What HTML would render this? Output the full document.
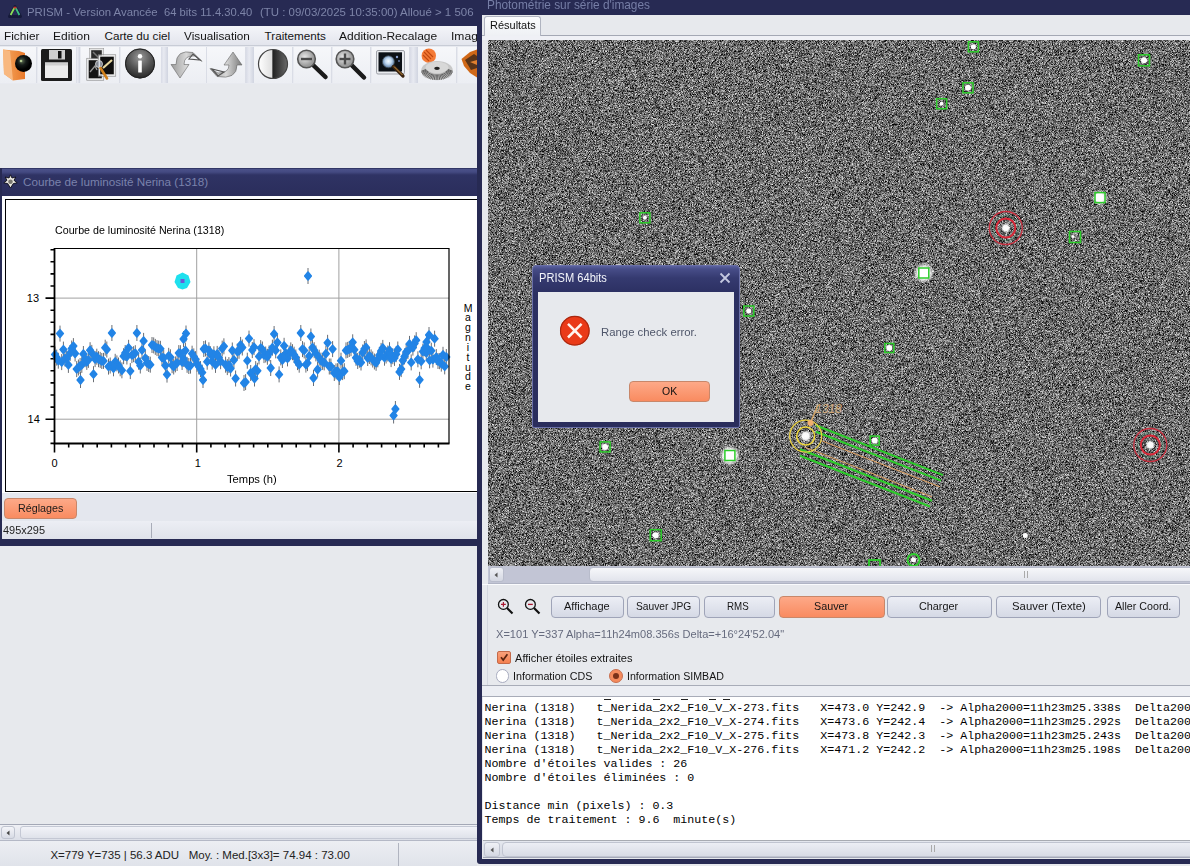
<!DOCTYPE html><html><head><meta charset="utf-8"><style>
*{margin:0;padding:0;box-sizing:border-box}
html,body{width:1190px;height:866px;overflow:hidden;background:#e7e9ed;font-family:"Liberation Sans",sans-serif;position:relative}
.a{position:absolute}
.t{position:absolute;white-space:pre;line-height:1}
.btn{position:absolute;border:1px solid #9fa4b8;border-radius:4px;background:linear-gradient(#eceef5,#d5d9e5)}
.obtn{position:absolute;border:1px solid #c8876a;border-radius:4px;background:linear-gradient(#fda988,#f98b60)}
.mono{position:absolute;font-family:"Liberation Mono",monospace;font-size:11.67px;white-space:pre;line-height:14px;color:#000}
</style></head><body>

<div class="a" style="left:0;top:0;width:478px;height:26px;background:#272a53"></div>
<svg class="a" style="left:7px;top:3px" width="16" height="17" viewBox="0 0 16 17">
<path d="M2.5 13.5 L8 3.5 L13.5 13.5 Z" fill="#252a58" stroke="#161a3a" stroke-width="3" stroke-linejoin="round"/>
<path d="M3.6 12 L7.3 5" stroke="#8ce05a" stroke-width="1.8"/><path d="M8.7 5 L12.4 12" stroke="#3cc080" stroke-width="1.8"/>
<path d="M6.6 4.6 L9.4 4.6" stroke="#c8302a" stroke-width="1.8"/></svg>
<div class="t" style="left:27.00px;top:6.00px;font-size:11.7px;color:#7d84a8;font-family:'Liberation Sans';transform:scaleX(0.9733);transform-origin:0 0;">PRISM - Version Avancée</div>
<div class="t" style="left:163.50px;top:6.00px;font-size:11.7px;color:#7d84a8;font-family:'Liberation Sans';transform:scaleX(0.9589);transform-origin:0 0;">64 bits 11.4.30.40</div>
<div class="t" style="left:260.30px;top:6.00px;font-size:11.7px;color:#7d84a8;font-family:'Liberation Sans';transform:scaleX(0.9794);transform-origin:0 0;">(TU : 09/03/2025 10:35:00) Alloué &gt; 1 506 :</div>
<div class="a" style="left:0;top:25.5px;width:477px;height:20.5px;background:linear-gradient(#f4f5f9,#e2e4ec)"></div>
<div class="t" style="left:4.40px;top:30.10px;font-size:11.7px;color:#141414;font-family:'Liberation Sans';transform:scaleX(1.0085);transform-origin:0 0;">Fichier</div>
<div class="t" style="left:53.40px;top:30.10px;font-size:11.7px;color:#141414;font-family:'Liberation Sans';transform:scaleX(1.0315);transform-origin:0 0;">Edition</div>
<div class="t" style="left:104.50px;top:30.10px;font-size:11.7px;color:#141414;font-family:'Liberation Sans';">Carte du ciel</div>
<div class="t" style="left:184.30px;top:30.10px;font-size:11.7px;color:#141414;font-family:'Liberation Sans';transform:scaleX(1.0072);transform-origin:0 0;">Visualisation</div>
<div class="t" style="left:264.60px;top:30.10px;font-size:11.7px;color:#141414;font-family:'Liberation Sans';">Traitements</div>
<div class="t" style="left:339.40px;top:30.10px;font-size:11.7px;color:#141414;font-family:'Liberation Sans';transform:scaleX(1.0279);transform-origin:0 0;">Addition-Recalage</div>
<div class="t" style="left:451.20px;top:30.10px;font-size:11.7px;color:#141414;font-family:'Liberation Sans';transform:scaleX(1.0344);transform-origin:0 0;">Imag</div>
<div class="a" style="left:0;top:45px;width:477px;height:1px;background:#c8ccd6"></div><div class="a" style="left:0;top:46px;width:477px;height:38px;background:#e8eaf0"></div><div class="a" style="left:0px;top:47px;width:37px;height:35.5px;background:linear-gradient(#f6f7fa,#eceef3);border-right:1px solid #dadde6"></div><div class="a" style="left:37.5px;top:47px;width:39.5px;height:35.5px;background:linear-gradient(#f6f7fa,#eceef3);border-right:1px solid #dadde6"></div><div class="a" style="left:81px;top:47px;width:39px;height:35.5px;background:linear-gradient(#f6f7fa,#eceef3);border-right:1px solid #dadde6"></div><div class="a" style="left:120.5px;top:47px;width:42px;height:35.5px;background:linear-gradient(#f6f7fa,#eceef3);border-right:1px solid #dadde6"></div><div class="a" style="left:168px;top:47px;width:38.5px;height:35.5px;background:linear-gradient(#f6f7fa,#eceef3);border-right:1px solid #dadde6"></div><div class="a" style="left:207px;top:47px;width:39px;height:35.5px;background:linear-gradient(#f6f7fa,#eceef3);border-right:1px solid #dadde6"></div><div class="a" style="left:254px;top:47px;width:39px;height:35.5px;background:linear-gradient(#f6f7fa,#eceef3);border-right:1px solid #dadde6"></div><div class="a" style="left:293.5px;top:47px;width:38.5px;height:35.5px;background:linear-gradient(#f6f7fa,#eceef3);border-right:1px solid #dadde6"></div><div class="a" style="left:332.5px;top:47px;width:38.5px;height:35.5px;background:linear-gradient(#f6f7fa,#eceef3);border-right:1px solid #dadde6"></div><div class="a" style="left:371.5px;top:47px;width:38.5px;height:35.5px;background:linear-gradient(#f6f7fa,#eceef3);border-right:1px solid #dadde6"></div><div class="a" style="left:418px;top:47px;width:39px;height:35.5px;background:linear-gradient(#f6f7fa,#eceef3);border-right:1px solid #dadde6"></div><div class="a" style="left:457.5px;top:47px;width:20px;height:35.5px;background:linear-gradient(#f6f7fa,#eceef3);border-right:1px solid #dadde6"></div><div class="a" style="left:76px;top:47px;width:4px;height:35.5px;background:linear-gradient(90deg,#d8dbe6,#e8eaf1 40%,#d0d4e0)"></div><div class="a" style="left:161px;top:47px;width:7px;height:35.5px;background:linear-gradient(90deg,#d8dbe6,#e8eaf1 40%,#d0d4e0)"></div><div class="a" style="left:246px;top:47px;width:8px;height:35.5px;background:linear-gradient(90deg,#d8dbe6,#e8eaf1 40%,#d0d4e0)"></div><div class="a" style="left:410px;top:47px;width:8px;height:35.5px;background:linear-gradient(90deg,#d8dbe6,#e8eaf1 40%,#d0d4e0)"></div><svg class="a" style="left:0;top:44px" width="477" height="42" viewBox="0 44 477 42">
<defs>
<linearGradient id="gfold" x1="0" x2="1"><stop offset="0" stop-color="#f6a860"/><stop offset="1" stop-color="#e8782a"/></linearGradient>
<radialGradient id="gball" cx="0.4" cy="0.35"><stop offset="0" stop-color="#5a6a50"/><stop offset="0.5" stop-color="#151a18"/><stop offset="1" stop-color="#000"/></radialGradient>
<radialGradient id="ginfo" cx="0.5" cy="0.3" r="0.7"><stop offset="0" stop-color="#9a9a9a"/><stop offset="0.55" stop-color="#555"/><stop offset="1" stop-color="#262626"/></radialGradient>
<linearGradient id="garrow" x1="0" x2="1"><stop offset="0" stop-color="#9a9a9a"/><stop offset="0.5" stop-color="#d8d8d8"/><stop offset="1" stop-color="#7a7a7a"/></linearGradient>
<linearGradient id="ghalf" x1="0" x2="1"><stop offset="0" stop-color="#fff"/><stop offset="0.45" stop-color="#e0e0e0"/><stop offset="0.5" stop-color="#222"/><stop offset="1" stop-color="#6a6a6a"/></linearGradient>
<radialGradient id="glens" cx="0.4" cy="0.4"><stop offset="0" stop-color="#e8e8e8"/><stop offset="1" stop-color="#9a9a9a"/></radialGradient>
<radialGradient id="gscr" cx="0.5" cy="0.45"><stop offset="0" stop-color="#f4faff"/><stop offset="0.5" stop-color="#c0d8f0"/><stop offset="1" stop-color="#6888b0"/></radialGradient>
<linearGradient id="ggear" x1="0" x2="0" y1="0" y2="1"><stop offset="0" stop-color="#f0f0f0"/><stop offset="1" stop-color="#8a8a8a"/></linearGradient>
</defs>
<!-- 1 folder + lens -->
<path d="M3 49.5 L19 51 L25 53 L25 79 L13 80.5 L4 74Z" fill="url(#gfold)"/>
<path d="M3 49.5 L10 51 L13 80.5 L4 74Z" fill="#f8b880"/>
<circle cx="23.5" cy="63.5" r="8.5" fill="url(#gball)"/>
<circle cx="21" cy="61" r="1.3" fill="#b0c890"/>
<!-- 2 floppy -->
<rect x="41" y="49" width="31" height="32" rx="1.5" fill="#1c1c1c"/>
<rect x="49" y="50" width="16" height="9.5" fill="#cfcfcf"/><rect x="58" y="51" width="3.5" height="7.5" fill="#111"/>
<rect x="45" y="62.5" width="23" height="15.5" fill="#ececec"/><rect x="45" y="62.5" width="23" height="3" fill="#d0d0d0"/>
<!-- 3 images -->
<rect x="90.5" y="49.5" width="12" height="12" fill="#2a2a2a" stroke="#e4e4e4" stroke-width="1.4"/><rect x="89.3" y="48.3" width="14.4" height="14.4" fill="none" stroke="#999" stroke-width="0.6"/>
<path d="M93 52 L99 58" stroke="#777" stroke-width="1.5"/>
<rect x="86.8" y="58.3" width="16.9" height="21.9" fill="none" stroke="#888" stroke-width="0.7"/><rect x="88" y="59.5" width="14.5" height="19.5" fill="#151515" stroke="#e8e8e8" stroke-width="1.4"/>
<path d="M90 72 L95 66 L97 70" stroke="#999" stroke-width="1.3" fill="none"/>
<rect x="98.3" y="54.8" width="17.4" height="21.4" fill="none" stroke="#888" stroke-width="0.7"/><rect x="99.5" y="56" width="15" height="19" fill="#0e0e0e" stroke="#e8e8e8" stroke-width="1.4"/>
<path d="M103 68 L112 60" stroke="#e8d8a0" stroke-width="2.2"/>
<circle cx="99" cy="64" r="3.5" fill="#c8d0e0" fill-opacity="0.6" stroke="#ddd" stroke-width="0.8"/>
<path d="M100.5 68 L107 78.5" stroke="#d0801c" stroke-width="2.6" stroke-linecap="round"/>
<!-- 4 info -->
<circle cx="140" cy="63.5" r="15" fill="url(#ginfo)"/>
<circle cx="140" cy="63.5" r="14.5" fill="none" stroke="#222" stroke-width="1"/>
<circle cx="140" cy="56.3" r="2.2" fill="#fff"/><rect x="138.2" y="60.5" width="3.6" height="12" rx="0.5" fill="#fff"/>
<!-- 5 arrow down-left -->
<path d="M171 64.5 L180 78 L189 64.5 L184 64.5 Q184 55 195 56 L202 61.5 L193 52.5 Q176 49 176 64.5Z" fill="url(#garrow)" stroke="#666" stroke-width="0.6"/>
<path d="M189 59 L193 54 L200 60Z" fill="none" stroke="#555" stroke-width="1.2"/>
<!-- 6 arrow up-right -->
<path d="M242 65 L233 52 L224 65 L229 65 Q229 73 218 73 L210 68.5 L217 76.5 Q237 80 237 65Z" fill="url(#garrow)" stroke="#666" stroke-width="0.6"/>
<path d="M212 69 L218 76 L224 72Z" fill="none" stroke="#555" stroke-width="1.2"/>
<!-- 7 half circle -->
<circle cx="273" cy="64" r="14.5" fill="url(#ghalf)" stroke="#444" stroke-width="1.2"/>
<!-- 8 magnifier minus -->
<path d="M312 64 L325.5 77" stroke="#1a1a1a" stroke-width="4.5" stroke-linecap="round"/>
<circle cx="306.5" cy="59" r="8.8" fill="url(#glens)" stroke="#555" stroke-width="1.6"/>
<rect x="301" y="57.8" width="11" height="2.4" fill="#4a4a4a"/>
<!-- 9 magnifier plus -->
<path d="M350.5 64 L364 77.5" stroke="#1a1a1a" stroke-width="4.5" stroke-linecap="round"/>
<circle cx="345" cy="59" r="8.8" fill="url(#glens)" stroke="#555" stroke-width="1.6"/>
<rect x="339.5" y="57.8" width="11" height="2.4" fill="#4a4a4a"/><rect x="343.8" y="53.5" width="2.4" height="11" fill="#4a4a4a"/>
<!-- 10 screen -->
<rect x="376.5" y="50.5" width="28" height="23.5" rx="1.5" fill="#e8eaee" stroke="#8a8e96" stroke-width="0.8"/>
<rect x="378.5" y="52.3" width="23.5" height="19.2" fill="#0b1016"/>
<circle cx="397" cy="57" r="1.2" fill="#8aa0d0"/><circle cx="399" cy="61" r="0.9" fill="#6a80b0"/>
<circle cx="388.4" cy="61.8" r="6" fill="url(#gscr)"/>
<circle cx="388.4" cy="61.8" r="6" fill="none" stroke="#404a50" stroke-width="0.8"/>
<path d="M393.5 66.5 L403 76" stroke="#3a2410" stroke-width="3.2" stroke-linecap="round"/>
<path d="M394 66.5 L402.5 75" stroke="#c89040" stroke-width="1"/>
<!-- 11 gears -->
<circle cx="428.8" cy="55.7" r="7.2" fill="#f47a36"/>
<path d="M424 52 L431 59 M426 50 L433 57 M423 55 L429 61" stroke="#c04810" stroke-width="1.1"/>
<ellipse cx="437" cy="70.5" rx="15.8" ry="9.6" fill="#c8c8c8"/>
<path d="M446.8 69.0L452.7 71.3M446.6 69.7L452.5 72.5M446.3 70.4L452.0 73.6M445.8 71.1L451.3 74.6M445.3 71.7L450.4 75.6M444.6 72.2L449.3 76.5M443.8 72.8L448.0 77.4M442.9 73.2L446.6 78.1M442.0 73.6L445.0 78.8M441.0 73.9L443.4 79.3M439.9 74.2L441.6 79.7M438.7 74.4L439.8 79.9M437.6 74.4L437.9 80.1M436.4 74.4L436.1 80.1M435.3 74.4L434.2 79.9M434.1 74.2L432.4 79.7M433.0 73.9L430.6 79.3M432.0 73.6L429.0 78.8M431.1 73.2L427.4 78.1M430.2 72.8L426.0 77.4M429.4 72.2L424.7 76.5M428.7 71.7L423.6 75.6M428.2 71.1L422.7 74.6M427.7 70.4L422.0 73.6M427.4 69.7L421.5 72.5M427.2 69.0L421.3 71.3" stroke="#555" stroke-width="0.9"/>
<ellipse cx="437" cy="67.5" rx="11.5" ry="5.8" fill="#d8d8d8"/>
<ellipse cx="437" cy="68.3" rx="2.8" ry="1.6" fill="#222"/>
<!-- 12 partial -->
<path d="M461.5 59 L470 52 L477 49.5 L477 77.5 L470 73 L464 66Z" fill="#d06818"/>
<path d="M465 60 L474 54 L477 56 L477 68 L471 70Z" fill="#5a3418"/>
<path d="M470 62 L477 60 L477 65Z" fill="#e08030"/>
</svg>
<div class="a" style="left:0;top:168px;width:477px;height:28px;background:linear-gradient(#262a55 0px,#4a5088 1.5px,#444a82 4px,#2f3364 7px,#2a2d5b 28px)"></div>
<svg class="a" style="left:3px;top:174px" width="15" height="15" viewBox="0 0 15 15">
<path d="M7.5 0.8 L9 4 L12.8 3 L11 6.3 L14.2 8.8 L10.3 9.6 L7.5 14 L4.7 9.6 L0.8 8.8 L4 6.3 L2.2 3 L6 4Z" fill="#ebe9e2" stroke="#0d0d18" stroke-width="0.9"/><circle cx="7.5" cy="7.7" r="2.3" fill="#7a7870"/></svg>
<div class="t" style="left:23.00px;top:176.10px;font-size:11.7px;color:#7a82ac;font-family:'Liberation Sans';">Courbe de luminosité Nerina (1318)</div>
<div class="a" style="left:0;top:196px;width:477px;height:343px;background:#e4e7ee"></div>
<div class="a" style="left:0;top:168px;width:2px;height:377px;background:#272a53"></div>
<div class="a" style="left:2px;top:196px;width:475px;height:297px;background:#fbfcfe"></div>
<div class="a" style="left:5px;top:199px;width:472px;height:293px;border:1px solid #000;border-right:none;background:#fff"></div>
<svg class="a" style="left:0;top:0" width="477" height="545" viewBox="0 0 477 545"><line x1="196.7" y1="248.5" x2="196.7" y2="443.5" stroke="#a0a0a0" stroke-width="1"/><line x1="338.9" y1="248.5" x2="338.9" y2="443.5" stroke="#a0a0a0" stroke-width="1"/><line x1="54.5" y1="298.1" x2="449" y2="298.1" stroke="#a0a0a0" stroke-width="1"/><line x1="54.5" y1="419.2" x2="449" y2="419.2" stroke="#a0a0a0" stroke-width="1"/><path d="M50.5 249.7H54.5M50.5 261.8H54.5M50.5 273.9H54.5M50.5 286.0H54.5M45.5 298.1H54.5M50.5 310.2H54.5M50.5 322.3H54.5M50.5 334.4H54.5M50.5 346.5H54.5M50.5 358.7H54.5M50.5 370.8H54.5M50.5 382.9H54.5M50.5 395.0H54.5M50.5 407.1H54.5M45.5 419.2H54.5M50.5 431.3H54.5M50.5 443.4H54.5M54.5 443.5V452.5M68.7 443.5V447.5M82.9 443.5V447.5M97.2 443.5V447.5M111.4 443.5V447.5M125.6 443.5V447.5M139.8 443.5V447.5M154.0 443.5V447.5M168.3 443.5V447.5M182.5 443.5V447.5M196.7 443.5V452.5M210.9 443.5V447.5M225.1 443.5V447.5M239.4 443.5V447.5M253.6 443.5V447.5M267.8 443.5V447.5M282.0 443.5V447.5M296.2 443.5V447.5M310.5 443.5V447.5M324.7 443.5V447.5M338.9 443.5V452.5M353.1 443.5V447.5M367.3 443.5V447.5M381.6 443.5V447.5M395.8 443.5V447.5M410.0 443.5V447.5M424.2 443.5V447.5M438.4 443.5V447.5" stroke="#000" stroke-width="1.6" fill="none"/><path d="M55.0 346.6V362.6M56.7 349.6V365.6M58.3 352.7V368.7M60.0 325.6V341.6M61.7 354.1V370.1M63.4 341.6V357.6M65.0 350.5V366.5M66.7 350.7V366.7M68.4 356.9V372.9M70.1 345.1V361.1M71.7 340.5V356.5M73.4 338.1V354.1M75.1 345.5V361.5M76.7 361.1V377.1M78.4 359.5V375.5M80.1 358.0V374.0M81.8 356.9V372.9M83.4 346.0V362.0M85.1 351.2V367.2M86.8 353.9V369.9M88.4 351.9V367.9M90.1 342.2V358.2M91.8 344.9V360.9M93.5 366.2V382.2M95.1 351.1V367.1M96.8 348.7V364.7M98.5 351.2V367.2M100.2 351.9V367.9M101.8 353.0V369.0M103.5 352.9V368.9M105.2 339.7V355.7M106.8 341.5V357.5M108.5 358.6V374.6M110.2 357.5V373.5M111.9 325.0V341.0M113.5 360.3V376.3M115.2 353.8V369.8M116.9 355.4V371.4M118.5 357.5V373.5M120.2 360.3V376.3M121.9 362.3V378.3M123.6 348.2V364.2M125.2 345.0V361.0M126.9 348.5V364.5M128.6 339.8V355.8M130.3 363.1V379.1M131.9 347.1V363.1M133.6 346.2V362.2M135.3 345.2V361.2M136.9 325.0V341.0M138.6 353.7V369.7M140.3 357.5V373.5M142.0 342.1V358.1M143.6 332.9V348.9M145.3 350.2V366.2M147.0 354.9V370.9M148.7 356.0V372.0M150.3 356.7V372.7M152.0 337.0V353.0M153.7 337.4V353.4M155.3 338.9V354.9M157.0 340.1V356.1M158.7 340.6V356.6M160.4 340.8V356.8M162.0 349.6V365.6M163.7 349.9V365.9M165.4 357.5V373.5M167.0 366.6V382.6M168.7 347.8V363.8M170.4 349.3V365.3M172.1 357.2V373.2M173.7 358.5V374.5M175.4 356.4V372.4M177.1 355.0V371.0M178.8 345.1V361.1M180.4 345.2V361.2M182.1 354.0V370.0M183.8 351.0V367.0M185.4 342.5V358.5M187.1 356.8V372.8M188.8 358.0V374.0M190.5 357.6V373.6M192.1 345.7V361.7M193.8 348.4V364.4M195.5 351.2V367.2M197.1 355.8V371.8M198.8 358.5V374.5M200.5 361.1V377.1M202.2 364.6V380.6M203.8 341.0V357.0M205.5 340.4V356.4M207.2 353.7V369.7M208.9 342.3V358.3M210.5 346.3V362.3M212.2 353.5V369.5M213.9 346.3V362.3M215.5 356.9V372.9M217.2 345.9V361.9M218.9 349.7V365.7M220.6 353.2V369.2M222.2 340.6V356.6M223.9 338.3V354.3M225.6 356.7V372.7M227.3 359.1V375.1M228.9 357.1V373.1M230.6 360.5V376.5M232.3 342.5V358.5M233.9 352.0V368.0M235.6 370.5V386.5M237.3 343.6V359.6M239.0 342.8V358.8M240.6 336.9V352.9M242.3 339.5V355.5M244.0 375.0V391.0M245.6 374.1V390.1M247.3 352.7V368.7M249.0 330.6V346.6M250.7 365.0V381.0M252.3 342.1V358.1M254.0 339.1V355.1M255.7 361.1V377.1M257.4 362.8V378.8M259.0 348.4V364.4M260.7 340.1V356.1M262.4 341.5V357.5M264.0 347.1V363.1M265.7 346.5V362.5M267.4 348.8V364.8M269.1 345.4V361.4M270.7 360.0V376.0M272.4 339.7V355.7M274.1 326.0V342.0M275.7 342.4V358.4M277.4 334.5V350.5M279.1 366.4V382.4M280.8 349.4V365.4M282.4 352.0V368.0M284.1 337.8V353.8M285.8 345.4V361.4M287.5 350.4V366.4M289.1 345.5V361.5M290.8 342.4V358.4M292.5 344.2V360.2M294.1 346.7V362.7M295.8 349.5V365.5M297.5 354.1V370.1M299.2 356.7V372.7M300.8 325.0V341.0M302.5 341.1V357.1M304.2 342.4V358.4M305.9 356.6V372.6M307.5 355.1V371.1M309.2 348.0V364.0M310.9 328.5V344.5M312.5 339.6V355.6M314.2 342.2V358.2M315.9 345.4V361.4M317.6 361.5V377.5M319.2 349.7V365.7M320.9 352.6V368.6M322.6 353.9V369.9M324.2 354.4V370.4M325.9 345.7V361.7M327.6 334.8V350.8M329.3 358.5V374.5M330.9 358.5V374.5M332.6 341.1V357.1M334.3 365.0V381.0M336.0 363.4V379.4M337.6 363.2V379.2M339.3 369.0V385.0M341.0 352.7V368.7M342.6 364.1V380.1M344.3 363.2V379.2M346.0 342.4V358.4M347.7 341.9V357.9M349.3 341.0V357.0M351.0 340.2V356.2M352.7 334.3V350.3M354.3 341.7V357.7M356.0 349.8V365.8M357.7 353.0V369.0M359.4 351.7V367.7M361.0 354.5V370.5M362.7 344.5V360.5M364.4 341.0V357.0M366.1 339.4V355.4M367.7 350.0V366.0M369.4 348.0V364.0M371.1 349.4V365.4M372.7 351.5V367.5M374.4 353.5V369.5M376.1 354.8V370.8M377.8 351.3V367.3M379.4 346.9V362.9M381.1 342.9V358.9M382.8 339.9V355.9M384.5 349.7V365.7M386.1 347.5V363.5M387.8 345.5V361.5M389.5 342.2V358.2M391.1 351.1V367.1M392.8 348.2V364.2M394.5 349.9V365.9M396.2 346.2V362.2M397.8 341.5V357.5M399.5 363.9V379.9M401.2 361.1V377.1M402.8 352.5V368.5M404.5 348.4V364.4M406.2 343.9V359.9M407.9 343.1V359.1M409.5 335.9V351.9M411.2 354.4V370.4M412.9 339.6V355.6M414.6 335.4V351.4M416.2 332.2V348.2M417.9 351.3V367.3M419.6 371.8V387.8M421.2 353.3V369.3M422.9 343.6V359.6M424.6 340.2V356.2M426.3 344.8V360.8M427.9 340.8V356.8M429.6 352.3V368.3M431.3 342.7V358.7M432.9 351.6V367.6M434.6 330.7V346.7M436.3 349.1V365.1M438.0 353.0V369.0M439.6 353.2V369.2M441.3 355.6V371.6M443.0 346.8V362.8M444.7 358.4V374.4M446.3 349.0V365.0M308.0 268.0V284.0M393.6 407.5V423.5M395.4 401.0V417.0M186.0 325.5V341.5M183.5 331.0V347.0M429.0 327.0V343.0M426.5 334.0V350.0M80.5 372.0V388.0M313.5 370.0V386.0M203.0 372.0V388.0M254.5 370.5V386.5" stroke="#6a6e74" stroke-width="1" fill="none"/><path d="M55.0 350.7L58.3 354.6L55.0 358.5L51.7 354.6ZM56.7 353.7L60.0 357.6L56.7 361.5L53.4 357.6ZM58.3 356.8L61.6 360.7L58.3 364.6L55.0 360.7ZM60.0 329.7L63.3 333.6L60.0 337.5L56.7 333.6ZM61.7 358.2L65.0 362.1L61.7 366.0L58.4 362.1ZM63.4 345.7L66.7 349.6L63.4 353.5L60.1 349.6ZM65.0 354.6L68.3 358.5L65.0 362.4L61.7 358.5ZM66.7 354.8L70.0 358.7L66.7 362.6L63.4 358.7ZM68.4 361.0L71.7 364.9L68.4 368.8L65.1 364.9ZM70.1 349.2L73.4 353.1L70.1 357.0L66.8 353.1ZM71.7 344.6L75.0 348.5L71.7 352.4L68.4 348.5ZM73.4 342.2L76.7 346.1L73.4 350.0L70.1 346.1ZM75.1 349.6L78.4 353.5L75.1 357.4L71.8 353.5ZM76.7 365.2L80.0 369.1L76.7 373.0L73.4 369.1ZM78.4 363.6L81.7 367.5L78.4 371.4L75.1 367.5ZM80.1 362.1L83.4 366.0L80.1 369.9L76.8 366.0ZM81.8 361.0L85.1 364.9L81.8 368.8L78.5 364.9ZM83.4 350.1L86.7 354.0L83.4 357.9L80.1 354.0ZM85.1 355.3L88.4 359.2L85.1 363.1L81.8 359.2ZM86.8 358.0L90.1 361.9L86.8 365.8L83.5 361.9ZM88.4 356.0L91.7 359.9L88.4 363.8L85.1 359.9ZM90.1 346.3L93.4 350.2L90.1 354.1L86.8 350.2ZM91.8 349.0L95.1 352.9L91.8 356.8L88.5 352.9ZM93.5 370.3L96.8 374.2L93.5 378.1L90.2 374.2ZM95.1 355.2L98.4 359.1L95.1 363.0L91.8 359.1ZM96.8 352.8L100.1 356.7L96.8 360.6L93.5 356.7ZM98.5 355.3L101.8 359.2L98.5 363.1L95.2 359.2ZM100.2 356.0L103.5 359.9L100.2 363.8L96.9 359.9ZM101.8 357.1L105.1 361.0L101.8 364.9L98.5 361.0ZM103.5 357.0L106.8 360.9L103.5 364.8L100.2 360.9ZM105.2 343.8L108.5 347.7L105.2 351.6L101.9 347.7ZM106.8 345.6L110.1 349.5L106.8 353.4L103.5 349.5ZM108.5 362.7L111.8 366.6L108.5 370.5L105.2 366.6ZM110.2 361.6L113.5 365.5L110.2 369.4L106.9 365.5ZM111.9 329.1L115.2 333.0L111.9 336.9L108.6 333.0ZM113.5 364.4L116.8 368.3L113.5 372.2L110.2 368.3ZM115.2 357.9L118.5 361.8L115.2 365.7L111.9 361.8ZM116.9 359.5L120.2 363.4L116.9 367.3L113.6 363.4ZM118.5 361.6L121.8 365.5L118.5 369.4L115.2 365.5ZM120.2 364.4L123.5 368.3L120.2 372.2L116.9 368.3ZM121.9 366.4L125.2 370.3L121.9 374.2L118.6 370.3ZM123.6 352.3L126.9 356.2L123.6 360.1L120.3 356.2ZM125.2 349.1L128.5 353.0L125.2 356.9L121.9 353.0ZM126.9 352.6L130.2 356.5L126.9 360.4L123.6 356.5ZM128.6 343.9L131.9 347.8L128.6 351.7L125.3 347.8ZM130.3 367.2L133.6 371.1L130.3 375.0L127.0 371.1ZM131.9 351.2L135.2 355.1L131.9 359.0L128.6 355.1ZM133.6 350.3L136.9 354.2L133.6 358.1L130.3 354.2ZM135.3 349.3L138.6 353.2L135.3 357.1L132.0 353.2ZM136.9 329.1L140.2 333.0L136.9 336.9L133.6 333.0ZM138.6 357.8L141.9 361.7L138.6 365.6L135.3 361.7ZM140.3 361.6L143.6 365.5L140.3 369.4L137.0 365.5ZM142.0 346.2L145.3 350.1L142.0 354.0L138.7 350.1ZM143.6 337.0L146.9 340.9L143.6 344.8L140.3 340.9ZM145.3 354.3L148.6 358.2L145.3 362.1L142.0 358.2ZM147.0 359.0L150.3 362.9L147.0 366.8L143.7 362.9ZM148.7 360.1L152.0 364.0L148.7 367.9L145.4 364.0ZM150.3 360.8L153.6 364.7L150.3 368.6L147.0 364.7ZM152.0 341.1L155.3 345.0L152.0 348.9L148.7 345.0ZM153.7 341.5L157.0 345.4L153.7 349.3L150.4 345.4ZM155.3 343.0L158.6 346.9L155.3 350.8L152.0 346.9ZM157.0 344.2L160.3 348.1L157.0 352.0L153.7 348.1ZM158.7 344.7L162.0 348.6L158.7 352.5L155.4 348.6ZM160.4 344.9L163.7 348.8L160.4 352.7L157.1 348.8ZM162.0 353.7L165.3 357.6L162.0 361.5L158.7 357.6ZM163.7 354.0L167.0 357.9L163.7 361.8L160.4 357.9ZM165.4 361.6L168.7 365.5L165.4 369.4L162.1 365.5ZM167.0 370.7L170.3 374.6L167.0 378.5L163.7 374.6ZM168.7 351.9L172.0 355.8L168.7 359.7L165.4 355.8ZM170.4 353.4L173.7 357.3L170.4 361.2L167.1 357.3ZM172.1 361.3L175.4 365.2L172.1 369.1L168.8 365.2ZM173.7 362.6L177.0 366.5L173.7 370.4L170.4 366.5ZM175.4 360.5L178.7 364.4L175.4 368.3L172.1 364.4ZM177.1 359.1L180.4 363.0L177.1 366.9L173.8 363.0ZM178.8 349.2L182.1 353.1L178.8 357.0L175.5 353.1ZM180.4 349.3L183.7 353.2L180.4 357.1L177.1 353.2ZM182.1 358.1L185.4 362.0L182.1 365.9L178.8 362.0ZM183.8 355.1L187.1 359.0L183.8 362.9L180.5 359.0ZM185.4 346.6L188.7 350.5L185.4 354.4L182.1 350.5ZM187.1 360.9L190.4 364.8L187.1 368.7L183.8 364.8ZM188.8 362.1L192.1 366.0L188.8 369.9L185.5 366.0ZM190.5 361.7L193.8 365.6L190.5 369.5L187.2 365.6ZM192.1 349.8L195.4 353.7L192.1 357.6L188.8 353.7ZM193.8 352.5L197.1 356.4L193.8 360.3L190.5 356.4ZM195.5 355.3L198.8 359.2L195.5 363.1L192.2 359.2ZM197.1 359.9L200.4 363.8L197.1 367.7L193.8 363.8ZM198.8 362.6L202.1 366.5L198.8 370.4L195.5 366.5ZM200.5 365.2L203.8 369.1L200.5 373.0L197.2 369.1ZM202.2 368.7L205.5 372.6L202.2 376.5L198.9 372.6ZM203.8 345.1L207.1 349.0L203.8 352.9L200.5 349.0ZM205.5 344.5L208.8 348.4L205.5 352.3L202.2 348.4ZM207.2 357.8L210.5 361.7L207.2 365.6L203.9 361.7ZM208.9 346.4L212.2 350.3L208.9 354.2L205.6 350.3ZM210.5 350.4L213.8 354.3L210.5 358.2L207.2 354.3ZM212.2 357.6L215.5 361.5L212.2 365.4L208.9 361.5ZM213.9 350.4L217.2 354.3L213.9 358.2L210.6 354.3ZM215.5 361.0L218.8 364.9L215.5 368.8L212.2 364.9ZM217.2 350.0L220.5 353.9L217.2 357.8L213.9 353.9ZM218.9 353.8L222.2 357.7L218.9 361.6L215.6 357.7ZM220.6 357.3L223.9 361.2L220.6 365.1L217.3 361.2ZM222.2 344.7L225.5 348.6L222.2 352.5L218.9 348.6ZM223.9 342.4L227.2 346.3L223.9 350.2L220.6 346.3ZM225.6 360.8L228.9 364.7L225.6 368.6L222.3 364.7ZM227.3 363.2L230.6 367.1L227.3 371.0L224.0 367.1ZM228.9 361.2L232.2 365.1L228.9 369.0L225.6 365.1ZM230.6 364.6L233.9 368.5L230.6 372.4L227.3 368.5ZM232.3 346.6L235.6 350.5L232.3 354.4L229.0 350.5ZM233.9 356.1L237.2 360.0L233.9 363.9L230.6 360.0ZM235.6 374.6L238.9 378.5L235.6 382.4L232.3 378.5ZM237.3 347.7L240.6 351.6L237.3 355.5L234.0 351.6ZM239.0 346.9L242.3 350.8L239.0 354.7L235.7 350.8ZM240.6 341.0L243.9 344.9L240.6 348.8L237.3 344.9ZM242.3 343.6L245.6 347.5L242.3 351.4L239.0 347.5ZM244.0 379.1L247.3 383.0L244.0 386.9L240.7 383.0ZM245.6 378.2L248.9 382.1L245.6 386.0L242.3 382.1ZM247.3 356.8L250.6 360.7L247.3 364.6L244.0 360.7ZM249.0 334.7L252.3 338.6L249.0 342.5L245.7 338.6ZM250.7 369.1L254.0 373.0L250.7 376.9L247.4 373.0ZM252.3 346.2L255.6 350.1L252.3 354.0L249.0 350.1ZM254.0 343.2L257.3 347.1L254.0 351.0L250.7 347.1ZM255.7 365.2L259.0 369.1L255.7 373.0L252.4 369.1ZM257.4 366.9L260.7 370.8L257.4 374.7L254.1 370.8ZM259.0 352.5L262.3 356.4L259.0 360.3L255.7 356.4ZM260.7 344.2L264.0 348.1L260.7 352.0L257.4 348.1ZM262.4 345.6L265.7 349.5L262.4 353.4L259.1 349.5ZM264.0 351.2L267.3 355.1L264.0 359.0L260.7 355.1ZM265.7 350.6L269.0 354.5L265.7 358.4L262.4 354.5ZM267.4 352.9L270.7 356.8L267.4 360.7L264.1 356.8ZM269.1 349.5L272.4 353.4L269.1 357.3L265.8 353.4ZM270.7 364.1L274.0 368.0L270.7 371.9L267.4 368.0ZM272.4 343.8L275.7 347.7L272.4 351.6L269.1 347.7ZM274.1 330.1L277.4 334.0L274.1 337.9L270.8 334.0ZM275.7 346.5L279.0 350.4L275.7 354.3L272.4 350.4ZM277.4 338.6L280.7 342.5L277.4 346.4L274.1 342.5ZM279.1 370.5L282.4 374.4L279.1 378.3L275.8 374.4ZM280.8 353.5L284.1 357.4L280.8 361.3L277.5 357.4ZM282.4 356.1L285.7 360.0L282.4 363.9L279.1 360.0ZM284.1 341.9L287.4 345.8L284.1 349.7L280.8 345.8ZM285.8 349.5L289.1 353.4L285.8 357.3L282.5 353.4ZM287.5 354.5L290.8 358.4L287.5 362.3L284.2 358.4ZM289.1 349.6L292.4 353.5L289.1 357.4L285.8 353.5ZM290.8 346.5L294.1 350.4L290.8 354.3L287.5 350.4ZM292.5 348.3L295.8 352.2L292.5 356.1L289.2 352.2ZM294.1 350.8L297.4 354.7L294.1 358.6L290.8 354.7ZM295.8 353.6L299.1 357.5L295.8 361.4L292.5 357.5ZM297.5 358.2L300.8 362.1L297.5 366.0L294.2 362.1ZM299.2 360.8L302.5 364.7L299.2 368.6L295.9 364.7ZM300.8 329.1L304.1 333.0L300.8 336.9L297.5 333.0ZM302.5 345.2L305.8 349.1L302.5 353.0L299.2 349.1ZM304.2 346.5L307.5 350.4L304.2 354.3L300.9 350.4ZM305.9 360.7L309.2 364.6L305.9 368.5L302.6 364.6ZM307.5 359.2L310.8 363.1L307.5 367.0L304.2 363.1ZM309.2 352.1L312.5 356.0L309.2 359.9L305.9 356.0ZM310.9 332.6L314.2 336.5L310.9 340.4L307.6 336.5ZM312.5 343.7L315.8 347.6L312.5 351.5L309.2 347.6ZM314.2 346.3L317.5 350.2L314.2 354.1L310.9 350.2ZM315.9 349.5L319.2 353.4L315.9 357.3L312.6 353.4ZM317.6 365.6L320.9 369.5L317.6 373.4L314.3 369.5ZM319.2 353.8L322.5 357.7L319.2 361.6L315.9 357.7ZM320.9 356.7L324.2 360.6L320.9 364.5L317.6 360.6ZM322.6 358.0L325.9 361.9L322.6 365.8L319.3 361.9ZM324.2 358.5L327.5 362.4L324.2 366.3L320.9 362.4ZM325.9 349.8L329.2 353.7L325.9 357.6L322.6 353.7ZM327.6 338.9L330.9 342.8L327.6 346.7L324.3 342.8ZM329.3 362.6L332.6 366.5L329.3 370.4L326.0 366.5ZM330.9 362.6L334.2 366.5L330.9 370.4L327.6 366.5ZM332.6 345.2L335.9 349.1L332.6 353.0L329.3 349.1ZM334.3 369.1L337.6 373.0L334.3 376.9L331.0 373.0ZM336.0 367.5L339.3 371.4L336.0 375.3L332.7 371.4ZM337.6 367.3L340.9 371.2L337.6 375.1L334.3 371.2ZM339.3 373.1L342.6 377.0L339.3 380.9L336.0 377.0ZM341.0 356.8L344.3 360.7L341.0 364.6L337.7 360.7ZM342.6 368.2L345.9 372.1L342.6 376.0L339.3 372.1ZM344.3 367.3L347.6 371.2L344.3 375.1L341.0 371.2ZM346.0 346.5L349.3 350.4L346.0 354.3L342.7 350.4ZM347.7 346.0L351.0 349.9L347.7 353.8L344.4 349.9ZM349.3 345.1L352.6 349.0L349.3 352.9L346.0 349.0ZM351.0 344.3L354.3 348.2L351.0 352.1L347.7 348.2ZM352.7 338.4L356.0 342.3L352.7 346.2L349.4 342.3ZM354.3 345.8L357.6 349.7L354.3 353.6L351.0 349.7ZM356.0 353.9L359.3 357.8L356.0 361.7L352.7 357.8ZM357.7 357.1L361.0 361.0L357.7 364.9L354.4 361.0ZM359.4 355.8L362.7 359.7L359.4 363.6L356.1 359.7ZM361.0 358.6L364.3 362.5L361.0 366.4L357.7 362.5ZM362.7 348.6L366.0 352.5L362.7 356.4L359.4 352.5ZM364.4 345.1L367.7 349.0L364.4 352.9L361.1 349.0ZM366.1 343.5L369.4 347.4L366.1 351.3L362.8 347.4ZM367.7 354.1L371.0 358.0L367.7 361.9L364.4 358.0ZM369.4 352.1L372.7 356.0L369.4 359.9L366.1 356.0ZM371.1 353.5L374.4 357.4L371.1 361.3L367.8 357.4ZM372.7 355.6L376.0 359.5L372.7 363.4L369.4 359.5ZM374.4 357.6L377.7 361.5L374.4 365.4L371.1 361.5ZM376.1 358.9L379.4 362.8L376.1 366.7L372.8 362.8ZM377.8 355.4L381.1 359.3L377.8 363.2L374.5 359.3ZM379.4 351.0L382.7 354.9L379.4 358.8L376.1 354.9ZM381.1 347.0L384.4 350.9L381.1 354.8L377.8 350.9ZM382.8 344.0L386.1 347.9L382.8 351.8L379.5 347.9ZM384.5 353.8L387.8 357.7L384.5 361.6L381.2 357.7ZM386.1 351.6L389.4 355.5L386.1 359.4L382.8 355.5ZM387.8 349.6L391.1 353.5L387.8 357.4L384.5 353.5ZM389.5 346.3L392.8 350.2L389.5 354.1L386.2 350.2ZM391.1 355.2L394.4 359.1L391.1 363.0L387.8 359.1ZM392.8 352.3L396.1 356.2L392.8 360.1L389.5 356.2ZM394.5 354.0L397.8 357.9L394.5 361.8L391.2 357.9ZM396.2 350.3L399.5 354.2L396.2 358.1L392.9 354.2ZM397.8 345.6L401.1 349.5L397.8 353.4L394.5 349.5ZM399.5 368.0L402.8 371.9L399.5 375.8L396.2 371.9ZM401.2 365.2L404.5 369.1L401.2 373.0L397.9 369.1ZM402.8 356.6L406.1 360.5L402.8 364.4L399.5 360.5ZM404.5 352.5L407.8 356.4L404.5 360.3L401.2 356.4ZM406.2 348.0L409.5 351.9L406.2 355.8L402.9 351.9ZM407.9 347.2L411.2 351.1L407.9 355.0L404.6 351.1ZM409.5 340.0L412.8 343.9L409.5 347.8L406.2 343.9ZM411.2 358.5L414.5 362.4L411.2 366.3L407.9 362.4ZM412.9 343.7L416.2 347.6L412.9 351.5L409.6 347.6ZM414.6 339.5L417.9 343.4L414.6 347.3L411.3 343.4ZM416.2 336.3L419.5 340.2L416.2 344.1L412.9 340.2ZM417.9 355.4L421.2 359.3L417.9 363.2L414.6 359.3ZM419.6 375.9L422.9 379.8L419.6 383.7L416.3 379.8ZM421.2 357.4L424.5 361.3L421.2 365.2L417.9 361.3ZM422.9 347.7L426.2 351.6L422.9 355.5L419.6 351.6ZM424.6 344.3L427.9 348.2L424.6 352.1L421.3 348.2ZM426.3 348.9L429.6 352.8L426.3 356.7L423.0 352.8ZM427.9 344.9L431.2 348.8L427.9 352.7L424.6 348.8ZM429.6 356.4L432.9 360.3L429.6 364.2L426.3 360.3ZM431.3 346.8L434.6 350.7L431.3 354.6L428.0 350.7ZM432.9 355.7L436.2 359.6L432.9 363.5L429.6 359.6ZM434.6 334.8L437.9 338.7L434.6 342.6L431.3 338.7ZM436.3 353.2L439.6 357.1L436.3 361.0L433.0 357.1ZM438.0 357.1L441.3 361.0L438.0 364.9L434.7 361.0ZM439.6 357.3L442.9 361.2L439.6 365.1L436.3 361.2ZM441.3 359.7L444.6 363.6L441.3 367.5L438.0 363.6ZM443.0 350.9L446.3 354.8L443.0 358.7L439.7 354.8ZM444.7 362.5L448.0 366.4L444.7 370.3L441.4 366.4ZM446.3 353.1L449.6 357.0L446.3 360.9L443.0 357.0ZM308.0 272.1L311.3 276.0L308.0 279.9L304.7 276.0ZM393.6 411.6L396.9 415.5L393.6 419.4L390.3 415.5ZM395.4 405.1L398.7 409.0L395.4 412.9L392.1 409.0ZM186.0 329.6L189.3 333.5L186.0 337.4L182.7 333.5ZM183.5 335.1L186.8 339.0L183.5 342.9L180.2 339.0ZM429.0 331.1L432.3 335.0L429.0 338.9L425.7 335.0ZM426.5 338.1L429.8 342.0L426.5 345.9L423.2 342.0ZM80.5 376.1L83.8 380.0L80.5 383.9L77.2 380.0ZM313.5 374.1L316.8 378.0L313.5 381.9L310.2 378.0ZM203.0 376.1L206.3 380.0L203.0 383.9L199.7 380.0ZM254.5 374.6L257.8 378.5L254.5 382.4L251.2 378.5Z" fill="#2284e6" stroke="#2284e6" stroke-width="1.6" stroke-linejoin="round"/><path d="M182.5 272.5 L188.5 275.5 L190.5 282 L187 288 L182.5 289.5 L178 288 L174.5 282 L176.5 275.5Z" fill="#1ee0ee"/><rect x="180.5" y="279" width="4" height="4" fill="#6a5ad8"/><path d="M54.5 248.5H449V443.5" stroke="#000" stroke-width="1.2" fill="none"/><path d="M54.5 248.0V443.5H449.5" stroke="#000" stroke-width="1.8" fill="none"/></svg>
<div class="t" style="left:54.50px;top:224.89px;font-size:11px;color:#000;font-family:'Liberation Sans';transform:scaleX(0.9711);transform-origin:0 0;">Courbe de luminosité Nerina (1318)</div>
<div class="t" style="left:26.80px;top:292.69px;font-size:11px;color:#000;font-family:'Liberation Sans';">13</div>
<div class="t" style="left:27.60px;top:414.19px;font-size:11px;color:#000;font-family:'Liberation Sans';">14</div>
<div class="t" style="left:51.60px;top:457.69px;font-size:11px;color:#000;font-family:'Liberation Sans';">0</div>
<div class="t" style="left:194.80px;top:457.69px;font-size:11px;color:#000;font-family:'Liberation Sans';">1</div>
<div class="t" style="left:336.60px;top:457.69px;font-size:11px;color:#000;font-family:'Liberation Sans';">2</div>
<div class="t" style="left:226.80px;top:474.49px;font-size:11px;color:#000;font-family:'Liberation Sans';transform:scaleX(1.0167);transform-origin:0 0;">Temps (h)</div>
<div class="t" style="left:462px;width:12px;text-align:center;top:302.5px;font-size:10.5px;color:#000">M</div>
<div class="t" style="left:462px;width:12px;text-align:center;top:312.4px;font-size:10.5px;color:#000">a</div>
<div class="t" style="left:462px;width:12px;text-align:center;top:322.2px;font-size:10.5px;color:#000">g</div>
<div class="t" style="left:462px;width:12px;text-align:center;top:332.1px;font-size:10.5px;color:#000">n</div>
<div class="t" style="left:462px;width:12px;text-align:center;top:341.9px;font-size:10.5px;color:#000">i</div>
<div class="t" style="left:462px;width:12px;text-align:center;top:351.8px;font-size:10.5px;color:#000">t</div>
<div class="t" style="left:462px;width:12px;text-align:center;top:361.6px;font-size:10.5px;color:#000">u</div>
<div class="t" style="left:462px;width:12px;text-align:center;top:371.4px;font-size:10.5px;color:#000">d</div>
<div class="t" style="left:462px;width:12px;text-align:center;top:381.3px;font-size:10.5px;color:#000">e</div>
<div class="obtn" style="left:3.5px;top:498px;width:73px;height:21px"></div>
<div class="t" style="left:17.60px;top:503.07px;font-size:11.5px;color:#1a1a1a;font-family:'Liberation Sans';transform:scaleX(0.9335);transform-origin:0 0;">Réglages</div>
<div class="a" style="left:2px;top:521px;width:475px;height:18px;background:linear-gradient(#eceef4,#dfe2ea)"></div>
<div class="t" style="left:3.20px;top:524.77px;font-size:11.5px;color:#222;font-family:'Liberation Sans';transform:scaleX(0.9533);transform-origin:0 0;">495x295</div>
<div class="a" style="left:151px;top:523px;width:1px;height:15px;background:#a8acb8"></div>
<div class="a" style="left:0;top:539px;width:477px;height:6.5px;background:#272a53"></div>
<div class="a" style="left:0;top:824px;width:477px;height:17px;background:linear-gradient(#eff0f5,#dcdfe8);border-top:1px solid #a4a8b6;border-bottom:1px solid #b4b8c6"></div>
<div class="a" style="left:1px;top:826px;width:14px;height:13px;border-radius:3px;background:linear-gradient(#f4f5f9,#d8dbe5);border:1px solid #c0c4d0"></div>
<svg class="a" style="left:4px;top:829px" width="8" height="8"><path d="M5.5 1.5 L2.5 4 L5.5 6.5Z" fill="#444"/></svg>
<div class="a" style="left:20px;top:826px;width:460px;height:13px;border-radius:3px;border:1px solid #c4c8d4;background:linear-gradient(#f2f3f8,#dfe2ea)"></div>
<div class="a" style="left:0;top:841px;width:477px;height:25px;background:linear-gradient(#eceef3,#e0e3ea)"></div>
<div class="t" style="left:50.40px;top:849.77px;font-size:11.5px;color:#222;font-family:'Liberation Sans';">X=779 Y=735 | 56.3 ADU   Moy. : Med.[3x3]= 74.94 : 73.00</div>
<div class="a" style="left:398px;top:843px;width:1px;height:23px;background:#b0b4c0"></div>
<div class="a" style="left:477px;top:0;width:713px;height:864px;background:#272a53;border-radius:0 0 0 3px"></div>
<div class="t" style="left:486.50px;top:-1.24px;font-size:12.8px;color:#767ea6;font-family:'Liberation Sans';transform:scaleX(0.9259);transform-origin:0 0;">Photométrie sur série d&#x27;images</div>
<div class="a" style="left:482px;top:15px;width:708px;height:844px;background:#e7e9ed"></div>
<div class="a" style="left:482px;top:35px;width:708px;height:1px;background:#a4a8b4"></div>
<div class="a" style="left:484px;top:15.5px;width:57px;height:20px;background:linear-gradient(#fbfcfd,#eef0f4);border:1px solid #b0b4c0;border-bottom:none;border-radius:3px 3px 0 0"></div>
<div class="t" style="left:489.50px;top:19.10px;font-size:11.7px;color:#111;font-family:'Liberation Sans';transform:scaleX(0.9393);transform-origin:0 0;">Résultats</div>
<div class="a" style="left:482px;top:36px;width:708px;height:4px;background:#eff0f5"></div>
<div class="a" style="left:488px;top:40px;width:702px;height:526px;overflow:hidden;background:#6b6b6b"><svg style="position:absolute;left:0;top:0;transform:scale(1.0);transform-origin:0 0" width="704.0" height="528.0"><filter id="nz" x="0" y="0" width="704.0" height="528.0" filterUnits="userSpaceOnUse" color-interpolation-filters="sRGB"><feTurbulence type="fractalNoise" baseFrequency="2.3" numOctaves="1" seed="5"/><feColorMatrix type="matrix" values="1.75 0 0 0 -0.457  1.75 0 0 0 -0.457  1.75 0 0 0 -0.457  0 0 0 0 1"/></filter><rect x="0" y="0" width="704.0" height="528.0" filter="url(#nz)"/></svg></div>
<svg class="a" style="left:488px;top:40px" width="702" height="526" viewBox="488 40 702 526"><defs><radialGradient id="glow"><stop offset="0" stop-color="#fff"/><stop offset="0.55" stop-color="#fff" stop-opacity="0.95"/><stop offset="1" stop-color="#fff" stop-opacity="0"/></radialGradient>
</defs><circle cx="923.8" cy="273" r="11" fill="url(#glow)"/><circle cx="729.9" cy="455.5" r="11" fill="url(#glow)"/><circle cx="1100" cy="197.6" r="8" fill="url(#glow)"/><circle cx="805.7" cy="436.1" r="6" fill="url(#glow)"/><circle cx="1005.8" cy="228" r="5" fill="url(#glow)"/><circle cx="1150.3" cy="445" r="5" fill="url(#glow)"/><circle cx="973.4" cy="46.8" r="2.5" fill="#fff"/><circle cx="968" cy="87.8" r="3" fill="#fff"/><circle cx="941.6" cy="103.7" r="2" fill="#fff"/><circle cx="1144" cy="60.3" r="3" fill="#fff"/><circle cx="644.9" cy="217.8" r="2" fill="#fff"/><circle cx="748.8" cy="311" r="2.5" fill="#fff"/><circle cx="889.3" cy="348" r="3" fill="#fff"/><circle cx="605.1" cy="446.9" r="3" fill="#fff"/><circle cx="655.7" cy="535.2" r="3" fill="#fff"/><circle cx="874.7" cy="440.6" r="3" fill="#fff"/><circle cx="913.5" cy="559.7" r="2.5" fill="#fff"/><circle cx="1025.3" cy="535.6" r="2.5" fill="#fff"/><circle cx="1073" cy="236.5" r="1.5" fill="#fff"/><circle cx="1099" cy="197.6" r="4" fill="#fff"/><circle cx="923.8" cy="273" r="6" fill="#fff"/><circle cx="729.9" cy="455.5" r="6" fill="#fff"/><rect x="968.4" y="41.8" width="10" height="10" fill="none" stroke="#2ccc2a" stroke-width="1.5"/><rect x="963.0" y="82.8" width="10" height="10" fill="none" stroke="#2ccc2a" stroke-width="1.5"/><rect x="936.6" y="98.7" width="10" height="10" fill="none" stroke="#2ccc2a" stroke-width="1.5"/><rect x="1138.5" y="54.8" width="11" height="11" fill="none" stroke="#2ccc2a" stroke-width="1.5"/><rect x="639.9" y="212.8" width="10" height="10" fill="none" stroke="#2ccc2a" stroke-width="1.5"/><rect x="743.8" y="306.0" width="10" height="10" fill="none" stroke="#2ccc2a" stroke-width="1.5"/><rect x="884.8" y="343.5" width="9" height="9" fill="none" stroke="#2ccc2a" stroke-width="1.5"/><rect x="600.1" y="441.9" width="10" height="10" fill="none" stroke="#2ccc2a" stroke-width="1.5"/><rect x="650.2" y="529.7" width="11" height="11" fill="none" stroke="#2ccc2a" stroke-width="1.5"/><rect x="870.2" y="436.1" width="9" height="9" fill="none" stroke="#2ccc2a" stroke-width="1.5"/><rect x="1095.0" y="192.6" width="10" height="10" fill="none" stroke="#2ccc2a" stroke-width="1.5"/><rect x="918.8" y="268.0" width="10" height="10" fill="none" stroke="#2ccc2a" stroke-width="1.5"/><rect x="724.9" y="450.5" width="10" height="10" fill="none" stroke="#2ccc2a" stroke-width="1.5"/><rect x="1069.5" y="231.5" width="11" height="11" fill="none" stroke="#2ccc2a" stroke-width="1.5"/><circle cx="913.5" cy="560" r="6" fill="none" stroke="#2ccc2a" stroke-width="1.8"/><rect x="869" y="560" width="11" height="10" fill="none" stroke="#2ccc2a" stroke-width="1.8"/><circle cx="1005.8" cy="228" r="16.5" fill="none" stroke="#c83040" stroke-width="1.3"/><circle cx="1005.8" cy="228" r="12.5" fill="none" stroke="#3a8a60" stroke-opacity="0.5" stroke-width="1"/><circle cx="1005.8" cy="228" r="9.5" fill="none" stroke="#d82838" stroke-width="1.9"/><circle cx="1150.3" cy="445" r="16.5" fill="none" stroke="#c83040" stroke-width="1.3"/><circle cx="1150.3" cy="445" r="12.5" fill="none" stroke="#3a8a60" stroke-opacity="0.5" stroke-width="1"/><circle cx="1150.3" cy="445" r="9.5" fill="none" stroke="#d82838" stroke-width="1.9"/><line x1="816" y1="425.5" x2="943" y2="475.1" stroke="#2ccc2a" stroke-width="2"/><line x1="816" y1="431.8" x2="941" y2="480.6" stroke="#2ccc2a" stroke-width="2"/><line x1="822" y1="440.9" x2="940" y2="486.9" stroke="#e0a060" stroke-width="1"/><line x1="805" y1="447.2" x2="932" y2="496.8" stroke="#e0a060" stroke-width="1"/><line x1="800" y1="449.3" x2="932" y2="500.8" stroke="#2ccc2a" stroke-width="2"/><line x1="800" y1="455.8" x2="930" y2="506.5" stroke="#2ccc2a" stroke-width="2"/><circle cx="805.7" cy="436.1" r="16" fill="none" stroke="#e8d040" stroke-width="1.3"/><circle cx="805.7" cy="436.1" r="9" fill="none" stroke="#f0d838" stroke-width="1.5"/><path d="M810 424 L818 405" stroke="#d8a868" stroke-width="1.5"/><circle cx="810.5" cy="423" r="3" fill="#f0b070"/><text x="815" y="413" font-family="Liberation Sans" font-size="12" fill="#d0a878" font-style="italic">1318</text></svg>
<div class="a" style="left:488px;top:566px;width:702px;height:17.5px;background:#c2c5d5;border-bottom:1px solid #b0b4c4"></div>
<div class="a" style="left:489px;top:567px;width:15px;height:15px;border-radius:3px;background:linear-gradient(#eef0f5,#d4d7e2);border:1px solid #b8bccb"></div>
<svg class="a" style="left:492px;top:571px" width="8" height="8"><path d="M5.5 1.5 L2.5 4 L5.5 6.5Z" fill="#555"/></svg>
<div class="a" style="left:589px;top:567px;width:610px;height:15px;border-radius:4px;background:linear-gradient(#f6f7fa,#e2e4ec);border:1px solid #b8bccb"></div>
<div class="a" style="left:1024px;top:571px;width:1px;height:7px;background:#aaa"></div><div class="a" style="left:1027px;top:571px;width:1px;height:7px;background:#aaa"></div>
<div class="a" style="left:482px;top:584px;width:708px;height:1px;background:#fafbfd"></div>
<svg class="a" style="left:496px;top:598px" width="50" height="18" viewBox="0 0 50 18">
<circle cx="7.4" cy="6.4" r="4.9" fill="none" stroke="#111" stroke-width="1.3"/><path d="M5 6.4H9.8M7.4 4V8.8" stroke="#a81830" stroke-width="1.2"/><path d="M11 10 L16.5 15.5" stroke="#111" stroke-width="2.2"/>
<circle cx="34.4" cy="6.4" r="4.9" fill="none" stroke="#111" stroke-width="1.3"/><path d="M32 6.4H36.8" stroke="#a81830" stroke-width="1.3"/><path d="M38 10 L43.5 15.5" stroke="#111" stroke-width="2.2"/>
</svg>
<div class="btn" style="left:551px;top:595.5px;width:72.7px;height:22px"></div>
<div class="t" style="left:564.20px;top:601.43px;font-size:11.3px;color:#161616;font-family:'Liberation Sans';transform:scaleX(0.9753);transform-origin:0 0;">Affichage</div>
<div class="btn" style="left:627px;top:595.5px;width:73.0px;height:22px"></div>
<div class="t" style="left:635.80px;top:601.43px;font-size:11.3px;color:#161616;font-family:'Liberation Sans';transform:scaleX(0.9071);transform-origin:0 0;">Sauver JPG</div>
<div class="btn" style="left:703.8px;top:595.5px;width:71.2px;height:22px"></div>
<div class="t" style="left:726.50px;top:601.43px;font-size:11.3px;color:#161616;font-family:'Liberation Sans';transform:scaleX(0.8621);transform-origin:0 0;">RMS</div>
<div class="obtn" style="left:779.4px;top:595.5px;width:105.5px;height:22px"></div>
<div class="t" style="left:814.30px;top:601.43px;font-size:11.3px;color:#161616;font-family:'Liberation Sans';transform:scaleX(0.9539);transform-origin:0 0;">Sauver</div>
<div class="btn" style="left:887.3px;top:595.5px;width:105.1px;height:22px"></div>
<div class="t" style="left:919.20px;top:601.43px;font-size:11.3px;color:#161616;font-family:'Liberation Sans';transform:scaleX(0.9588);transform-origin:0 0;">Charger</div>
<div class="btn" style="left:996.4px;top:595.5px;width:104.9px;height:22px"></div>
<div class="t" style="left:1011.50px;top:601.43px;font-size:11.3px;color:#161616;font-family:'Liberation Sans';transform:scaleX(1.0052);transform-origin:0 0;">Sauver (Texte)</div>
<div class="btn" style="left:1107.3px;top:595.5px;width:72.3px;height:22px"></div>
<div class="t" style="left:1115.20px;top:601.43px;font-size:11.3px;color:#161616;font-family:'Liberation Sans';transform:scaleX(0.9445);transform-origin:0 0;">Aller Coord.</div>
<div class="t" style="left:495.70px;top:628.89px;font-size:11px;color:#666b7e;font-family:'Liberation Sans';transform:scaleX(1.0069);transform-origin:0 0;">X=101 Y=337 Alpha=11h24m08.356s Delta=+16°24&#x27;52.04&quot;</div>
<div class="a" style="left:497px;top:650.5px;width:14px;height:13.5px;border-radius:2px;background:linear-gradient(#f9a07a,#f48050);border:1px solid #c46a4a"></div>
<svg class="a" style="left:498px;top:651px" width="12" height="12"><path d="M3 6.3 L5.2 9 L9.4 3.2" stroke="#5a2410" stroke-width="1.7" fill="none"/></svg>
<div class="t" style="left:515.20px;top:651.90px;font-size:11.7px;color:#141414;font-family:'Liberation Sans';transform:scaleX(0.9484);transform-origin:0 0;">Afficher étoiles extraites</div>
<div class="a" style="left:495.5px;top:669px;width:13.5px;height:13.5px;border-radius:50%;background:#fff;border:1px solid #a8acc0"></div>
<div class="t" style="left:513.00px;top:670.10px;font-size:11.7px;color:#141414;font-family:'Liberation Sans';transform:scaleX(0.9177);transform-origin:0 0;">Information CDS</div>
<div class="a" style="left:609px;top:669px;width:14px;height:14px;border-radius:50%;background:#f58a5c;border:1px solid #c87050"></div>
<div class="a" style="left:613px;top:673px;width:6px;height:6px;border-radius:50%;background:#7a3018"></div>
<div class="t" style="left:627.00px;top:670.10px;font-size:11.7px;color:#141414;font-family:'Liberation Sans';transform:scaleX(0.9103);transform-origin:0 0;">Information SIMBAD</div>
<div class="a" style="left:487px;top:585px;width:1px;height:100px;background:#d4d7df"></div>
<div class="a" style="left:482px;top:685px;width:708px;height:1px;background:#a8acb8"></div>
<div class="a" style="left:482px;top:686px;width:708px;height:10px;background:#eceef3"></div>
<div class="a" style="left:482px;top:696px;width:708px;height:1px;background:#a8acb8"></div>
<div class="a" style="left:483px;top:697px;width:707px;height:143px;background:#fff;overflow:hidden">
<div class="mono" style="left:1.5px;top:3.79px">Nerina (1318)   t_Nerida_2x2_F10_V_X-273.fits   X=473.0 Y=242.9  -> Alpha2000=11h23m25.338s  Delta2000
Nerina (1318)   t_Nerida_2x2_F10_V_X-274.fits   X=473.6 Y=242.4  -> Alpha2000=11h23m25.292s  Delta2000
Nerina (1318)   t_Nerida_2x2_F10_V_X-275.fits   X=473.8 Y=242.3  -> Alpha2000=11h23m25.243s  Delta2000
Nerina (1318)   t_Nerida_2x2_F10_V_X-276.fits   X=471.2 Y=242.2  -> Alpha2000=11h23m25.198s  Delta2000
Nombre d'étoiles valides : 26
Nombre d'étoiles éliminées : 0

Distance min (pixels) : 0.3
Temps de traitement : 9.6  minute(s)</div>
<div class="a" style="left:120.6px;top:1.6px;width:7px;height:1.2px;background:#222"></div>
<div class="a" style="left:169.6px;top:1.6px;width:7px;height:1.2px;background:#222"></div>
<div class="a" style="left:197.6px;top:1.6px;width:7px;height:1.2px;background:#222"></div>
<div class="a" style="left:225.6px;top:1.6px;width:7px;height:1.2px;background:#222"></div>
<div class="a" style="left:239.6px;top:1.6px;width:7px;height:1.2px;background:#222"></div>
</div>
<div class="a" style="left:483px;top:840px;width:707px;height:18px;background:linear-gradient(#e4e7ee,#d6d9e3);border-top:1px solid #a8abb2;border-bottom:1px solid #a4a8b8"></div>
<div class="a" style="left:484px;top:842px;width:16px;height:15px;border-radius:3px;background:linear-gradient(#f0f1f6,#d4d7e2);border:1px solid #c0c4d0"></div>
<svg class="a" style="left:488px;top:846px" width="8" height="8"><path d="M5.5 1.5 L2.5 4 L5.5 6.5Z" fill="#555"/></svg>
<div class="a" style="left:502px;top:842px;width:700px;height:15px;border-radius:4px;background:linear-gradient(#eceef4,#d8dbe5);border:1px solid #c0c4d0"></div>
<div class="a" style="left:931px;top:845px;width:1px;height:7px;background:#aaa"></div><div class="a" style="left:934px;top:845px;width:1px;height:7px;background:#aaa"></div>
<div class="a" style="left:532px;top:265px;width:208px;height:163px;border-radius:4px 4px 2px 2px;background:linear-gradient(#5a61a0 0px,#474d88 3px,#353a70 12px,#2c3062 27px,#2a2d5c 100%);border:1px solid #6a70a8"></div>
<div class="t" style="left:538.60px;top:271.59px;font-size:12.3px;color:#f4f6fc;font-family:'Liberation Sans';transform:scaleX(0.9034);transform-origin:0 0;">PRISM 64bits</div>
<svg class="a" style="left:719px;top:272px" width="12" height="12"><path d="M1.5 1.5 L10.5 10.5 M10.5 1.5 L1.5 10.5" stroke="#c4c8e0" stroke-width="1.8"/></svg>
<div class="a" style="left:538px;top:292px;width:196px;height:130px;background:#e7e9ed"></div>
<svg class="a" style="left:559px;top:315px" width="32" height="32"><circle cx="15.8" cy="15.7" r="14.8" fill="#ea3a18"/><circle cx="15.8" cy="15.7" r="14.3" fill="none" stroke="#a82810" stroke-width="1.1"/><path d="M9 8.9 L22.6 22.5 M22.6 8.9 L9 22.5" stroke="#fff4ee" stroke-width="2.5"/></svg>
<div class="t" style="left:600.50px;top:326.10px;font-size:11.7px;color:#4f566a;font-family:'Liberation Sans';transform:scaleX(0.9709);transform-origin:0 0;">Range check error.</div>
<div class="obtn" style="left:629.3px;top:381.2px;width:80.5px;height:20.5px"></div>
<div class="t" style="left:662.30px;top:385.77px;font-size:11.5px;color:#111;font-family:'Liberation Sans';transform:scaleX(0.9120);transform-origin:0 0;">OK</div>
</body></html>
